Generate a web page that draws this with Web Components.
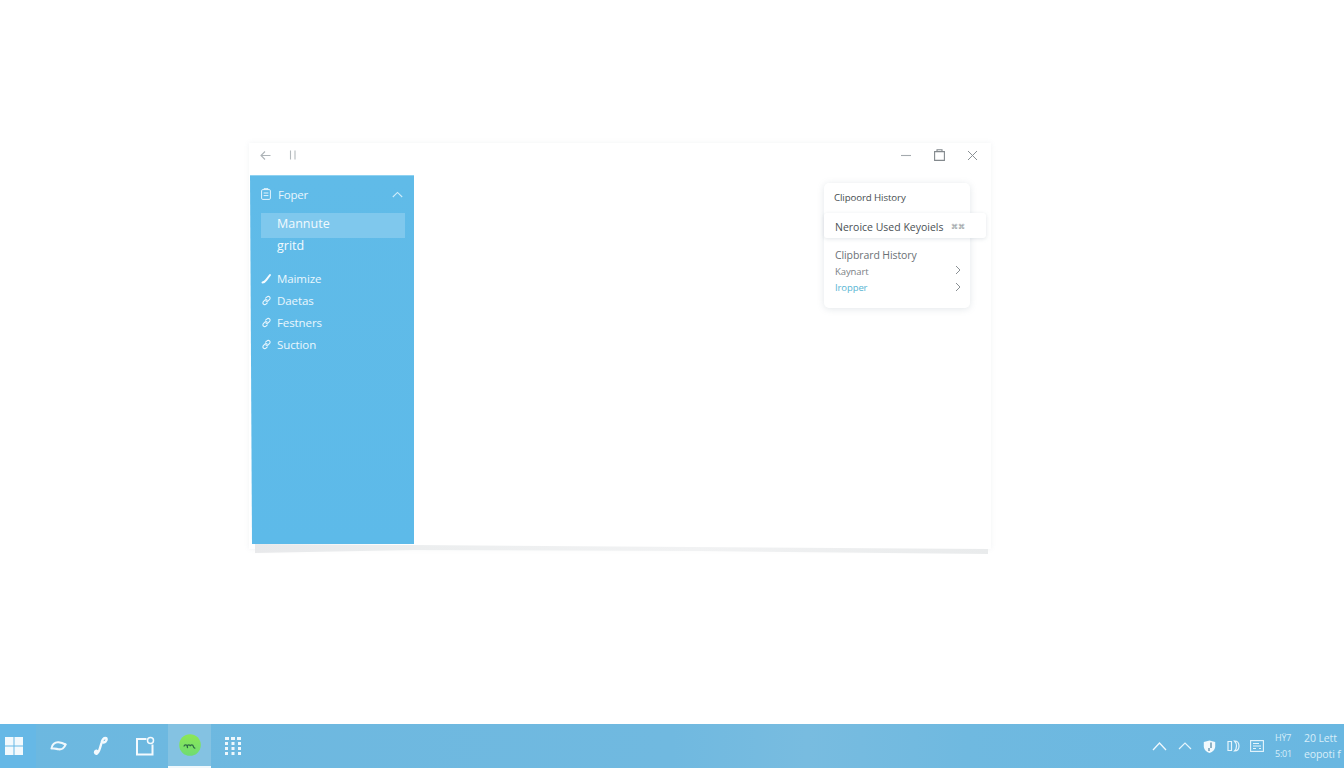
<!DOCTYPE html>
<html><head><meta charset="utf-8"><title>Clipboard</title>
<style>
html,body{margin:0;height:100%;background:#fff;overflow:hidden;font-family:"Open Sans","Liberation Sans",sans-serif}
body{display:flex;flex-direction:column;height:768px}
app-desktop{flex:1;min-height:0}
</style></head><body>
<app-desktop>
<app-window>
<side-bar slot="side">
<nav-head>Foper</nav-head>
<sub-item active>Mannute</sub-item>
<sub-item>gritd</sub-item>
<nav-item style="margin-top:13px" icon="wrench">Maimize</nav-item>
<nav-item icon="link">Daetas</nav-item>
<nav-item icon="link">Festners</nav-item>
<nav-item icon="link">Suction</nav-item>
</side-bar>
<clip-menu slot="menu"></clip-menu>
</app-window>
</app-desktop>
<task-bar></task-bar>
<script>
const def=(n,html)=>customElements.define(n,class extends HTMLElement{
  constructor(){super();this.attachShadow({mode:'open'}).innerHTML=typeof html==='function'?html(this):html;}
});
const ico={
 link:'<svg width="11" height="11" viewBox="0 0 11 11" fill="none" stroke="#e6f5fd" stroke-width="1.1" stroke-linecap="round"><path d="M4.600 3.200 6 1.900a1.700 1.700 0 0 1 2.600 2.500L7.200 5.800a1.700 1.700 0 0 1-2.400 0"/><path d="M6.300 7.800 5 9.100a1.700 1.700 0 0 1-2.600-2.500l1.400-1.400a1.700 1.700 0 0 1 2.400 0"/></svg>',
 wrench:'<svg width="11" height="11" viewBox="0 0 11 11" fill="none" stroke="#f4fbff" stroke-width="2" stroke-linecap="round"><path d="M1.500 9.500c1.500-.3 2.800-1.300 3.800-2.700L9 2"/></svg>'
};
def('app-desktop',`<style>:host{display:block;position:relative;background:#fff;isolation:isolate}
.wrap{padding:143px 0 0 249px}</style><div class="wrap"><slot></slot></div>`);
def('app-window',`<style>:host{display:block;position:relative;width:742px;height:406px;background:#fff;box-shadow:0 0 5px rgba(120,140,155,.1)}
.bar{height:32px;display:flex;align-items:center;padding:0 13px 8px 10px;box-sizing:border-box}
.bar svg{display:block}
.sp{flex:1}
.l{margin-right:17px}.ctl{margin-left:22px}
.body{height:369px;padding-left:1px}
.under{position:absolute;left:6px;top:401px;width:733px;height:10px;background:linear-gradient(90deg,#e8e9eb 0,#eceeef 22%,#f1f2f3 60%,#e9ebec 100%);clip-path:polygon(0 0,159px 1px,733px 5px,733px 10px,445px 7px,159px 6px,0 9px)}
::slotted([slot=menu]){position:absolute;left:575px;top:40px}
</style>
<div class="bar">
<svg class="l" width="13" height="11" viewBox="0 0 13 11" fill="none" stroke="#aeb4b8" stroke-width="1.1"><path d="M11.500 5.500H2M6 1.500 2 5.500l4 4"/></svg>
<svg width="8" height="10" viewBox="0 0 8 10" fill="none" stroke="#b4babd" stroke-width="1.1"><path d="M1.500 .5v9M6 .5v9"/></svg>
<span class="sp"></span>
<svg width="12" height="12" viewBox="0 0 12 12" fill="none" stroke="#a4aaae" stroke-width="1.1"><path d="M1 6.500h10"/></svg>
<svg class="ctl" width="11" height="12" viewBox="0 0 11 12" fill="none" stroke="#83898d" stroke-width="1.1"><path d="M.6 2.600h9.800v8.800H.6zM3 2.600V.8h5v1.800"/></svg>
<svg class="ctl" width="11" height="11" viewBox="0 0 11 11" fill="none" stroke="#8a9094" stroke-width="1"><path d="m1 1 9 9M10 1l-9 9"/></svg>
</div>
<div class="body"><slot name="side"></slot></div>
<slot name="menu"></slot>
<div class="under"></div>`);
def('side-bar',`<style>:host{display:block;width:164px;height:369px;background:linear-gradient(180deg,#60bbe8,#5dbae9);color:#fff;padding:7px 9px 0 11px;box-sizing:border-box;box-shadow:inset 0 1px 0 #8fd2f1;clip-path:polygon(0 0,100% 0,100% 100%,2px 100%)}</style><slot></slot>`);
def('nav-head',`<style>:host{display:flex;align-items:center;height:24px;font-size:11.500px;color:#e8f6fd;margin-bottom:7px;letter-spacing:-.2px;padding-right:2px}
svg{display:block}.t{flex:1;margin-left:7px}</style>
<svg width="10" height="12" viewBox="0 0 10 12" fill="none" stroke="#e6f5fd" stroke-width="1"><rect x=".6" y="1.600" width="8.800" height="9.800" rx="1.200"/><path d="M3 1.600V.7h4v.9M2.600 5h4.800M2.600 7.600h4.800"/></svg>
<span class="t"><slot></slot></span>
<svg width="11" height="7" viewBox="0 0 11 7" fill="none" stroke="#cfecfa" stroke-width="1.100"><path d="m.8 6 4.700-4.600L10.200 6"/></svg>`);
def('sub-item',`<style>:host{display:block;height:16px;line-height:16px;padding-left:16px;font-size:12.500px;color:#f2fafe;letter-spacing:0}
:host([active]){height:25px;line-height:22px;background:#7fc8ed}</style><slot></slot>`);
def('nav-item',el=>`<style>:host{display:flex;align-items:center;height:22px;font-size:11.500px;color:#eaf7fd;letter-spacing:-.1px}
span{display:flex;width:16px}</style><span>${ico[el.getAttribute('icon')]||''}</span><slot></slot>`);
def('clip-menu',`<style>:host{display:block;width:146px;height:125px;background:#fff;border-radius:5px;box-shadow:0 1px 7px rgba(110,130,145,.2);font-size:10.500px;color:#50565a;letter-spacing:-.1px}
.t{padding:7px 0 0 10px;height:23px;box-sizing:border-box;line-height:16px;color:#484d50;font-size:9.700px}
.hl{position:relative;display:flex;align-items:center;width:162px;height:25px;margin:7px 0 0 0;padding:2px 0 0 11px;box-sizing:border-box;background:#fff;border-radius:3px;box-shadow:0 1px 4px rgba(110,130,145,.2);color:#4a5054;white-space:nowrap;letter-spacing:0}
.hl small{font-size:7px;color:#8d9498;margin-left:7px}
.c{padding:8px 9px 0 11px}
.r{display:flex;align-items:center;justify-content:space-between;height:16px;font-size:9.500px;color:#7a8084}
.big{font-size:10.500px;height:17px;color:#6b7175}
.blue{color:#58b5d3}
svg{display:block}</style>
<div class="t">Clipoord History</div>
<div class="hl">Neroice Used Keyoiels<small>⌘⌘</small></div>
<div class="c"><div class="r big">Clipbrard History</div>
<div class="r">Kaynart<svg width="6" height="10" viewBox="0 0 6 10" fill="none" stroke="#8a9094" style="margin-top:-3px"><path d="m1 1 4 4-4 4"/></svg></div>
<div class="r blue">Iropper<svg width="6" height="10" viewBox="0 0 6 10" fill="none" stroke="#8a9094"><path d="m1 1 4 4-4 4"/></svg></div></div>`);
def('task-bar',`<style>:host{display:flex;align-items:stretch;height:44px;background:linear-gradient(90deg,#6cb8e0 0,#70b9e0 50%,#78bce0 60%,#6fb9e0 72%,#69b7e1 100%);color:#e9f6fd;flex:none}
.b{width:44px;display:flex;align-items:center;justify-content:center;box-sizing:border-box}
.s{width:36px;background:#66b8e6;padding-right:8px}
.a{background:#84c2e2;border-bottom:2px solid #f0f8fc;width:43px}
.sp{flex:1}
.tray{display:flex;align-items:center}
.clock{font-size:10.500px;line-height:16px;color:#d8eef9;white-space:nowrap;letter-spacing:-.1px}
svg{display:block}</style>
<div class="b s"><svg width="18" height="18" viewBox="0 0 18 18" fill="#f2f9fd"><path d="M0 0h8.500v8.500H0zM9.500 0H18v8.500H9.500zM0 9.500h8.500V18H0zM9.500 9.500H18V18H9.500z"/></svg></div>
<div class="b"><svg width="17" height="12" viewBox="0 0 17 12" fill="none" stroke="#f0f8fd" stroke-width="2.100" stroke-linecap="round"><path d="M1.500 8.500C1.800 4.500 5 2 8.500 2.300c2.500.2 4.500.8 7 2.200"/><path d="M15.500 4.500C14.500 8 11.500 9.800 8.500 9.300 6.500 9 5 8.200 3 8.500"/></svg></div>
<div class="b" style="width:42px"><svg width="16" height="20" viewBox="0 0 16 20" fill="none" stroke="#f4fafe" stroke-width="2.400" stroke-linecap="round" stroke-linejoin="round"><path d="M2.500 17.500c-1.200-1.200 0-3 1-2.800 1 .2 1.500 2.200.3 3-.8.500-1-.2-.3-.2 1.500 0 2.700-2.800 3.500-5.500l1.500-5c.7-2.800 2.500-5 4-5 1.500 0 1.500 2 .3 3.300-.5.500-1.300 1-2.300 1.200"/></svg></div>
<div class="b" style="width:46px"><svg width="20" height="20" viewBox="0 0 20 20" fill="none" stroke="#f4fafe" stroke-width="2"><path d="M11.500 3H2v15.500h15.500V8.500"/><circle cx="15.500" cy="4.500" r="3" stroke-width="1.500"/></svg></div>
<div class="b a"><svg width="22" height="22" viewBox="0 0 22 22"><defs><linearGradient id="g" x1="0" x2="0" y1="0" y2="1"><stop offset="0" stop-color="#8ce755"/><stop offset="1" stop-color="#6fdc72"/></linearGradient></defs><circle cx="11" cy="11" r="10.800" fill="url(#g)"/><path d="M5 12.500c.2-2 3-2.200 3.300-.2s.2 1.500 0 0c.2-2 2.800-2 3 0 .1-2 2.700-2 3 0 .1 1 1 1.800 2 2" fill="none" stroke="#2e6a46" stroke-width="1.300"/></svg></div>
<div class="b"><svg width="18" height="18" viewBox="0 0 18 18" fill="#eef7fc"><path d="M1 0h4v3H1zM7 0h4v3H7zM13 0h4v3h-4zM1 5h3v3H1zM7.500 5h3v3h-3zM14 5h3v3h-3zM1 10h3v3H1zM7.500 10h3v3h-3zM14 10h3v3h-3zM1 15h3v3H1zM7.500 15h3v3h-3zM14 15h3v3h-3z"/></svg></div>
<span class="sp"></span>
<div class="tray">
<svg width="15" height="9" viewBox="0 0 15 9" fill="none" stroke="#eff8fd" stroke-width="1.300" style="margin-right:11px"><path d="m1 8 6.500-7L14 8"/></svg>
<svg width="14" height="8" viewBox="0 0 14 8" fill="none" stroke="#e6f5fc" stroke-width="1.200" style="margin-right:11px"><path d="m1 7 6-6 6 6"/></svg>
<svg width="13" height="13" viewBox="0 0 13 13" style="margin-right:11px"><path d="M.8 2 6.500 .4 12.200 2v4.500c0 3-2.500 5.300-5.700 6.500C3.300 11.800.8 9.500.8 6.500z" fill="#f1f9fd"/><path d="M8 2.500v5.500M6 8v3" stroke="#5e8ea8" stroke-width="1.300"/></svg>
<svg width="13" height="12" viewBox="0 0 13 12" fill="none" stroke="#e6f5fc" stroke-width="1.200" style="margin-right:10px"><path d="M1 1.500h3.500v9H1zM7.500 1c3 0 4.500 2 4.500 5s-1.500 5-4.500 5c1.500-1.500 2-3 2-5s-.5-3.500-2-5z"/></svg>
<svg width="14" height="12" viewBox="0 0 14 12" fill="none" stroke="#e6f5fc" stroke-width="1.100" style="margin-right:11px"><rect x=".6" y=".6" width="12.800" height="10.800"/><path d="M3 3.500h6M3 6h8M3 8.500h3M9 8.500h2"/></svg>
<div class="clock" style="margin-right:11px;width:18px;font-size:9px;letter-spacing:-.2px">HΫ7<br>5:01</div>
<div class="clock" style="width:40px">20 Lett<br>eopoti f</div>
</div>`);
</script>
</body></html>
